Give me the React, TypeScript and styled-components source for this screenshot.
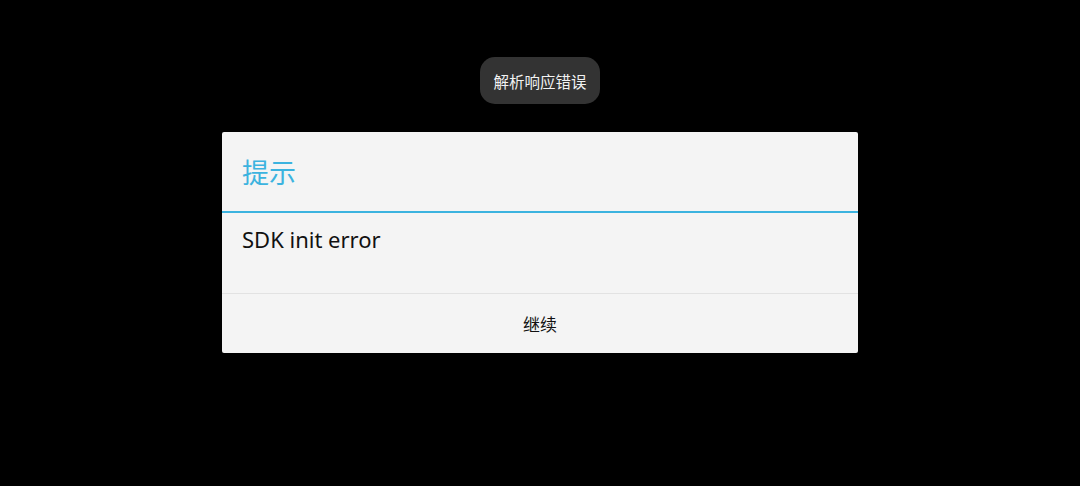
import styled, { createGlobalStyle } from "styled-components";

const GlobalStyle = createGlobalStyle`
  html, body {
    margin: 0;
    padding: 0;
    background: #000;
  }
  body {
    font-family: "Noto Sans", "Noto Sans CJK SC", sans-serif;
  }
`;

const Screen = styled.main`
  width: 1080px;
  height: 486px;
  background: #000;
  display: flex;
  flex-direction: column;
  align-items: center;
  padding-top: 57px;
  box-sizing: border-box;
`;

const Toast = styled.div`
  height: 47px;
  padding: 0 13px;
  box-sizing: border-box;
  display: flex;
  align-items: center;
  background: #333333;
  border-radius: 15px;
  color: #f2f2f2;
  font-size: 15.5px;
  font-family: "Noto Sans CJK SC", sans-serif;
`;

const Dialog = styled.section`
  margin-top: 28px;
  width: 636px;
  background: #f4f4f4;
  border-radius: 2px;
  display: flex;
  flex-direction: column;
`;

const Title = styled.h2`
  margin: 0;
  height: 79px;
  padding-left: 20px;
  display: flex;
  align-items: center;
  font-size: 27px;
  font-weight: 400;
  color: #3cb3df;
  font-family: "Noto Sans CJK SC", sans-serif;
  border-bottom: 2px solid #3cb3df;
`;

const Message = styled.p`
  margin: 0;
  height: 81px;
  padding: 11px 20px 0;
  box-sizing: border-box;
  font-size: 22px;
  color: #111;
  border-bottom: 1px solid #e2e2e2;
`;

const Action = styled.button`
  height: 59px;
  border: 0;
  background: transparent;
  font-family: "Noto Sans CJK SC", sans-serif;
  font-size: 17px;
  color: #111;
  cursor: pointer;
`;

export default function App() {
  return (
    <Screen>
      <GlobalStyle />
      <Toast>解析响应错误</Toast>
      <Dialog>
        <Title>提示</Title>
        <Message>SDK init error</Message>
        <Action>继续</Action>
      </Dialog>
    </Screen>
  );
}
